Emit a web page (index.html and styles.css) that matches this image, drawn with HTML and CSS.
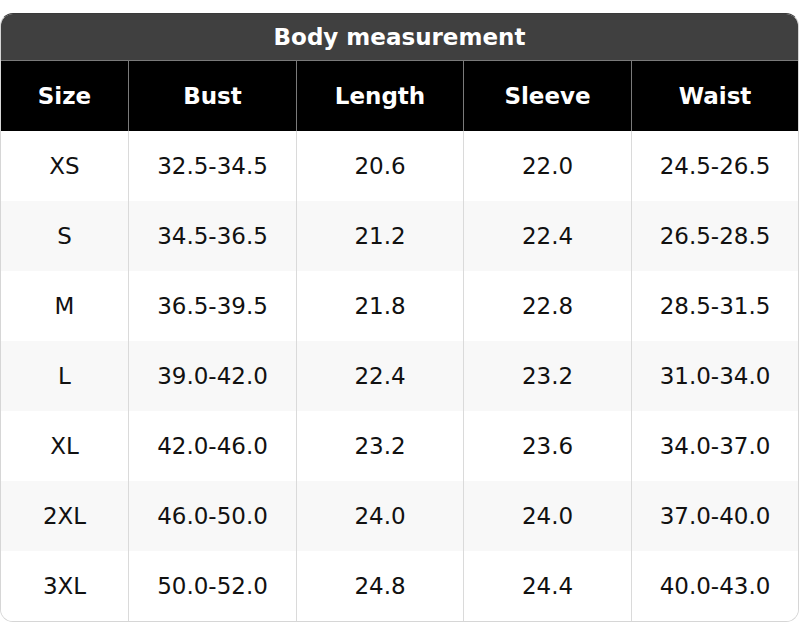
FILE: index.html
```html
<!DOCTYPE html>
<html>
<head>
<meta charset="utf-8">
<link rel="stylesheet" href="styles.css">
</head>
<body>
<div class="card">
  <div class="title">Body measurement</div>
  <div class="grid head">
    <div class="cell">Size</div>
    <div class="cell">Bust</div>
    <div class="cell">Length</div>
    <div class="cell">Sleeve</div>
    <div class="cell">Waist</div>
  </div>
  <div class="grid row">
    <div class="cell">XS</div><div class="cell">32.5-34.5</div><div class="cell">20.6</div><div class="cell">22.0</div><div class="cell">24.5-26.5</div>
  </div>
  <div class="grid row alt">
    <div class="cell">S</div><div class="cell">34.5-36.5</div><div class="cell">21.2</div><div class="cell">22.4</div><div class="cell">26.5-28.5</div>
  </div>
  <div class="grid row">
    <div class="cell">M</div><div class="cell">36.5-39.5</div><div class="cell">21.8</div><div class="cell">22.8</div><div class="cell">28.5-31.5</div>
  </div>
  <div class="grid row alt">
    <div class="cell">L</div><div class="cell">39.0-42.0</div><div class="cell">22.4</div><div class="cell">23.2</div><div class="cell">31.0-34.0</div>
  </div>
  <div class="grid row">
    <div class="cell">XL</div><div class="cell">42.0-46.0</div><div class="cell">23.2</div><div class="cell">23.6</div><div class="cell">34.0-37.0</div>
  </div>
  <div class="grid row alt">
    <div class="cell">2XL</div><div class="cell">46.0-50.0</div><div class="cell">24.0</div><div class="cell">24.0</div><div class="cell">37.0-40.0</div>
  </div>
  <div class="grid row">
    <div class="cell">3XL</div><div class="cell">50.0-52.0</div><div class="cell">24.8</div><div class="cell">24.4</div><div class="cell">40.0-43.0</div>
  </div>
</div>
</body>
</html>
```
FILE: styles.css
```css
html, body {
  margin: 0;
  padding: 0;
  background: #fff;
}
body {
  font-family: "DejaVu Sans", sans-serif;
  font-size: 23px;
  color: #111;
}
.card {
  margin-top: 13px;
  width: 799px;
  box-sizing: border-box;
  border: 1px solid #d6d6d6;
  border-top-color: #3a3a3a;
  border-radius: 13px;
  overflow: hidden;
}
.title {
  height: 47px;
  background: #404040;
  color: #fff;
  font-weight: bold;
  display: flex;
  align-items: center;
  justify-content: center;
  border-bottom: 1px solid #7a7a7a;
  box-sizing: border-box;
}
.grid {
  display: grid;
  grid-template-columns: 127px 168px 167px 168px 1fr;
}
.cell {
  display: flex;
  align-items: center;
  justify-content: center;
}
.cell + .cell {
  border-left: 1px solid #dadada;
}
.head {
  height: 70px;
  background: #000;
  color: #fff;
  font-weight: bold;
}
.head .cell + .cell {
  border-left-color: #7a7a7a;
}
.row {
  height: 70px;
  background: #fff;
}
.row.alt {
  background: #f8f8f8;
}
```
